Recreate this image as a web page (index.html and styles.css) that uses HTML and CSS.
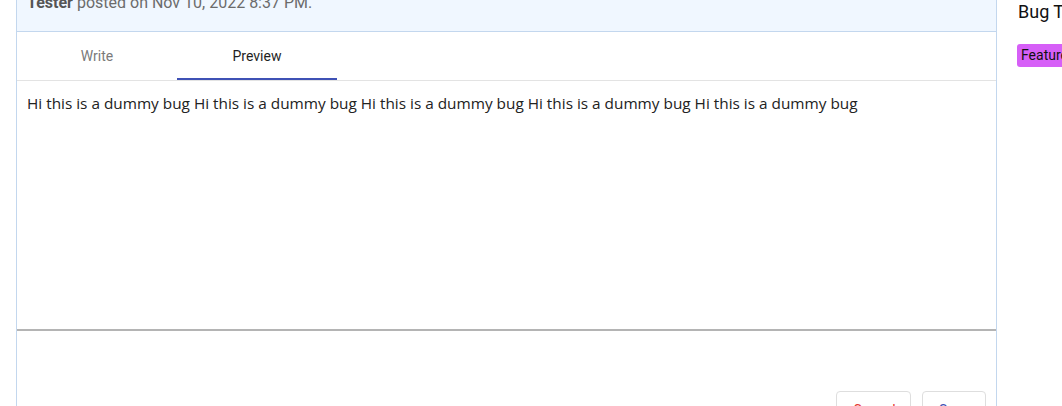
FILE: index.html
```html
<!DOCTYPE html>
<html>
<head>
<meta charset="utf-8">
<link rel="stylesheet" href="styles.css">
</head>
<body>
<div class="page">
  <div class="card">
    <div class="card-head"><b>Tester</b> posted on Nov 10, 2022 8:37 PM.</div>
    <div class="tabs">
      <div class="tab">Write</div>
      <div class="tab active">Preview</div>
    </div>
    <div class="preview">Hi this is a dummy bug Hi this is a dummy bug Hi this is a dummy bug Hi this is a dummy bug Hi this is a dummy bug</div>
    <div class="actions">
      <button class="btn cancel">Cancel</button>
      <button class="btn save">Save</button>
    </div>
  </div>
  <aside class="side">
    <div class="side-title">Bug Type</div>
    <div class="badges"><span class="badge">Feature Request</span></div>
  </aside>
</div>
</body>
</html>
```

FILE: styles.css
```css
html, body {
  margin: 0;
  padding: 0;
  overflow: hidden;
  background: #fff;
}
body {
  font-family: Roboto, "Liberation Sans", sans-serif;
  width: 1062px;
  height: 406px;
}
.page {
  display: flex;
  gap: 20px;
  padding-left: 16px;
  margin-top: -22px;
}
.card {
  flex: 0 0 981px;
  box-sizing: border-box;
  border: 1px solid #c3d7ee;
  border-bottom: none;
}
.card-head {
  background: #f0f7ff;
  border-bottom: 1px solid #c3d7ee;
  padding: 12px 10px 16px;
  font-size: 16px;
  line-height: 24px;
  color: #6b6b6b;
}
.card-head b {
  font-weight: 700;
  color: #555;
}
.tabs {
  display: flex;
  height: 48px;
  border-bottom: 1px solid #e3e3e3;
}
.tab {
  width: 160px;
  box-sizing: border-box;
  display: flex;
  align-items: center;
  justify-content: center;
  font-size: 14px;
  color: #7a7a7a;
  border-bottom: 2px solid transparent;
  padding-top: 2px;
}
.tab.active {
  color: #1f1f1f;
  border-bottom-color: #3f51b5;
}
.preview {
  height: 250px;
  box-sizing: border-box;
  padding: 11px 10px;
  font-family: "Open Sans", "Noto Sans", sans-serif;
  font-size: 15.35px;
  line-height: 22px;
  color: #222;
  border-bottom: 2px solid #b4b4b4;
}
.actions {
  display: flex;
  justify-content: flex-end;
  gap: 11px;
  padding: 60px 10px 0 0;
}
.btn {
  background: #fff;
  border: 1px solid #dedede;
  border-radius: 4px;
  font-family: Roboto, sans-serif;
  font-size: 14px;
  height: 36px;
  padding: 8px 16px;
  line-height: 20px;
}
.cancel { color: #e53935; width: 75px; }
.save { color: #3f51b5; width: 64px; }
.side {
  flex: 0 0 300px;
  padding-top: 22px;
}
.side-title {
  font-size: 18px;
  line-height: 24px;
  color: #111;
  padding-left: 1px;
}
.badges {
  margin-top: 20px;
}
.badge {
  display: inline-block;
  background: #d65ff7;
  color: #111;
  font-size: 14px;
  line-height: 23px;
  padding: 0 4px;
  border-radius: 3px;
}
```
